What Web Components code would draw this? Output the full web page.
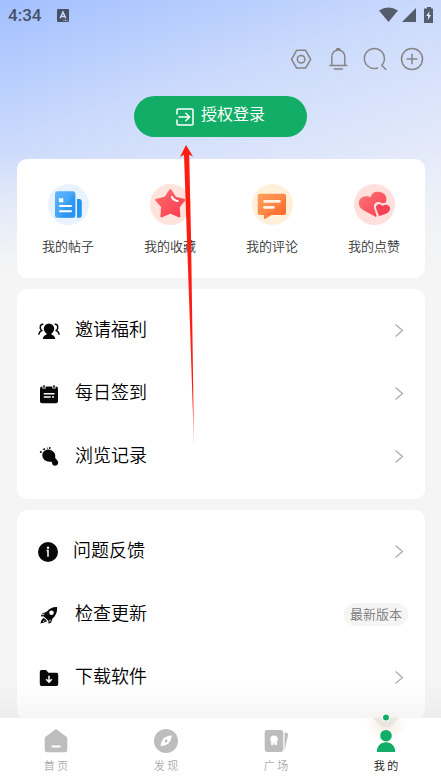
<!DOCTYPE html>
<html lang="zh-CN">
<head>
<meta charset="utf-8">
<meta name="viewport" content="width=device-width, initial-scale=1">
<title>我的</title>
<style>
  body { margin: 0; font-family: Roboto, "Noto Sans CJK SC", sans-serif; color: #111; background: #f5f5f5; }
</style>
</head>
<body>
<profile-page></profile-page>

<script>
const ICONS = {
  hexagon: [24, `<g fill="none" stroke="#858585" stroke-width="1.5" stroke-linejoin="round"><path d="M7.6 3.3h9l5.100 9-5.100 8.700h-9L2.500 12.300z"/><circle cx="12.100" cy="12.200" r="3.800"/></g>`],
  bell: [24, `<g fill="none" stroke="#858585" stroke-width="1.500" stroke-linecap="round" stroke-linejoin="round"><path d="M3.800 18.600h17M5.800 18.400V10c0-4 2.700-7 6.500-7s6.500 3 6.500 7v8.400M10.500 3c0-2 3.600-2 3.600 0M8.300 22h8"/></g>`],
  search: [24, `<g fill="none" stroke="#858585" stroke-width="1.500" stroke-linecap="round"><path d="M14.500 21A10 10 0 1 1 18.800 18.200L22.800 22.500"/></g>`],
  plus: [24, `<g fill="none" stroke="#858585" stroke-width="1.500" stroke-linecap="round"><circle cx="12" cy="12" r="10.500"/><path d="M7.200 12h9.600M12 7.200v9.600"/></g>`],
  login: [18, `<g fill="none" stroke="#fff" stroke-width="1.500" stroke-linecap="round" stroke-linejoin="round"><path d="M1 6V2q0-1 1-1h14q1 0 1 1v14q0 1-1 1H2q-1 0-1-1v-4M3 9h10.500M9.800 5.200L13.700 9l-3.900 3.800"/></g>`],
  chevron: [18, `<path d="M5.500 2.500l7 6-7 6" fill="none" stroke="#aaa" stroke-width="1.200"/>`],
  post: [41, `<defs><linearGradient id="a" x2="1" y2="1"><stop stop-color="#62b7ff"/><stop offset="1" stop-color="#2492ef"/></linearGradient></defs><circle cx="20.500" cy="20.500" r="20.500" fill="#e8f3ff"/><rect x="7" y="7.300" width="20.300" height="26.400" rx="2.500" fill="url(#a)"/><path d="M27.300 10v21q0 2.700-2.700 2.700H13Q16 20 27.300 10z" fill="#2492ef" opacity=".45"/><path d="M29 15h2.500q2.300 0 2.300 2.500v13.500q0 2.700-2.300 2.700H29z" fill="#2295ee"/><g fill="#fff"><path d="M11 14.300h4.300v3.900H11z"/><rect x="11" y="21" width="13" height="2" rx="1"/><rect x="11" y="26.200" width="13" height="2" rx="1"/></g>`],
  star: [41, `<defs><linearGradient id="a" x2="1" y2="1"><stop stop-color="#ff6b69"/><stop offset="1" stop-color="#fa3a52"/></linearGradient></defs><circle cx="20.500" cy="20.500" r="20.500" fill="#ffe3dc"/><path d="M20.400 6.500l4.900 7.500 8.700 2-5.500 6.800.7 9.400-8.800-3.700-8.800 3.700.700-9.400L6.500 16l8.900-2z" fill="url(#a)" stroke="url(#a)" stroke-width="2.400" stroke-linejoin="round"/><path d="M22 13q1 3 5.500 4" fill="none" stroke="#fff" stroke-width="2.200" stroke-linecap="round"/>`],
  comment: [41, `<defs><linearGradient id="a" x2="1" y2="1"><stop stop-color="#ffa05f"/><stop offset="1" stop-color="#fd6c2b"/></linearGradient></defs><circle cx="20.500" cy="20.500" r="20.500" fill="#fff0d9"/><path d="M8 9.700h23.800Q34 9.700 34 12v16.800q0 2.200-2.200 2.200H19.500l-6.600 4q-1 .2-1-1v-3H8q-2.300 0-2.300-2.200V12Q5.700 9.700 8 9.700z" fill="url(#a)"/><path d="M34 12v16.800q0 2.200-2.200 2.200H13Q28 25 34 12z" fill="#fd6c2b" opacity=".4"/><g fill="#fff3e4"><rect x="11.200" y="16" width="17.600" height="2.800" rx="1.400"/><rect x="11.200" y="22" width="11.600" height="2.800" rx="1.400"/></g>`],
  heart: [41, `<defs><linearGradient id="a" x2="1" y2="1"><stop stop-color="#ff7775"/><stop offset="1" stop-color="#f73c54"/></linearGradient></defs><circle cx="20.500" cy="20.500" r="20.500" fill="#ffe0dc"/><path d="M22 33L9 26C2.500 22 4 13 11 12.300c2.500-.2 4.500.300 5.500.900C17.500 9 21 7 25 7.800c6 .700 8.500 5.200 7 10.200z" fill="url(#a)"/><path d="M23.200 33.500L20.100 24c-1.200-5.500 4.400-7.800 7.900-4.500 5-2.500 10.600 2.500 8 7-2 3.500-6.500 5-12.800 7z" fill="#ffe0dc"/><path d="M25 32l-2.800-7.500c-1-4 3.500-6 6.200-2.500 4-3 8.600-.2 7.500 3.700-.900 3-5 4.700-10.900 6.300z" fill="#f54257"/>`],
  invite: [22, `<g fill="#080808"><circle cx="11" cy="8.700" r="5.200"/><path d="M4.800 19q.2-3.200 3.800-4.400V12h4.800v2.600q3.600 1.200 3.800 4.400z"/></g><g fill="none" stroke="#080808" stroke-width="1.500" stroke-linecap="round"><path d="M4.800 4.200C2 4 1.200 8.700 3.700 10.500Q1.200 11.800.900 14.200M17.200 4.200c2.800-.200 3.600 4.500 1.100 6.300q2.500 1.300 2.800 3.700"/></g>`],
  calendar: [22, `<rect x="2" y="3.600" width="18" height="16.600" rx="2" fill="#080808"/><g stroke="#fff" stroke-width="3.200"><path d="M6 1.500v4M16 1.500v4"/></g><g stroke="#080808" stroke-width="1.500" stroke-linecap="round"><path d="M6 2.700v1.600M16 2.700v1.600"/></g><g stroke="#fff" stroke-width="1.500"><path d="M5.700 10.700h10.800M5.700 14h7M14 14h2"/></g>`],
  foot: [22, `<g fill="#080808"><ellipse cx="10.800" cy="9.600" rx="6.700" ry="6" transform="rotate(25 10.800 9.600)"/><path d="M11 14.500l4.500-4.500 3.700 4.300q2 2.500 0 4.700-2.500 1.700-4.600-.3l-1-3z"/><circle cx="2.800" cy="6" r="1"/><circle cx="6.200" cy="3.200" r=".9"/><circle cx="11.800" cy="2" r=".9"/></g><path d="M5 3.800l1-1M8.900 2.200h1" stroke="#080808"/>`],
  info: [20, `<circle cx="10" cy="10" r="10" fill="#080808"/><circle cx="10" cy="5.700" r="1.200" fill="#fff"/><path d="M8.600 8.500h1.400v6.200" fill="none" stroke="#fff" stroke-width="1.500"/>`],
  rocket: [22, `<g fill="#080808"><path d="M19.100 3c.400 5-1.500 9-4.600 11.600l-1.300 3.800-2.500 1.400-.4-3.100-4.400-4.200-3.200-.3 1.500-2.800 4.400-1.600C11.400 4.400 14.800 2.800 19.100 3z"/><path d="M5.700 13.800l3.500 3.300-2 1-1 .500-3.800 1 1.100-3.700z"/></g><circle cx="13.500" cy="8.700" r="2.300" fill="#fff"/><path d="M4 11l2.600-1.100M11.800 17.700l.5-2M5 17.800l1.500-1.400" stroke="#fff" stroke-width=".9"/>`],
  folder: [22, `<path d="M3.500 3h4.600l2.400 2.800h8q1.700 0 1.700 1.700v9.800q0 1.700-1.700 1.700H3.500q-1.700 0-1.700-1.700V4.700Q1.800 3 3.500 3z" fill="#080808"/><path d="M11 8.800v6M8.200 12.200l2.800 2.900 2.800-2.900" fill="none" stroke="#fff" stroke-width="1.500"/>`],
  home: [24, `<path d="M10.800.700q1.200-.9 2.400 0l8.900 6.800q1.200.9 1.200 2.400v11q0 2.400-2.400 2.400H3.100Q.7 23.300.7 20.900v-11q0-1.500 1.200-2.400z" fill="#bdbdbd"/><path d="M8.400 17.500h7.400" stroke="#fff" stroke-width="2" stroke-linecap="round"/>`],
  compass: [24, `<circle cx="12" cy="12" r="12" fill="#bdbdbd"/><path d="M17.900 6.400q-5.600.4-8.300 2.800-2.400 2.500-3.300 7.900 5.700-.5 8.300-2.900 2.600-2.600 3.300-7.800z" fill="#fff"/><circle cx="12.100" cy="12" r="1.400" fill="#bdbdbd"/>`],
  album: [24, `<rect x=".700" y="1" width="18.600" height="22" rx="2.400" fill="#bdbdbd"/><path d="M20.600 3.200l1.900.5q1.900.6 1.500 2.300l-3.400 15.500z" fill="#bdbdbd"/><g fill="#fff"><circle cx="10" cy="10.200" r="3.800"/><path d="M8 12.500l1.800 1-.8 3-2.500-1.300zM12 12.500l-1.800 1 .8 3 2.500-1.300z"/></g>`],
  person: [24, `<g fill="#12ad66"><circle cx="12" cy="6.700" r="5.800"/><path d="M2.800 23c0-5.800 3.600-9.800 9.200-9.800s9.200 4 9.200 9.800z"/></g>`],
};

function define(name, html, setup) {
  const template = document.createElement("template");
  template.innerHTML = html;
  customElements.define(name, class extends HTMLElement {
    connectedCallback() {
      if (this.shadowRoot) return;
      this.attachShadow({ mode: "open" }).append(template.content.cloneNode(true));
      if (setup) setup(this, this.shadowRoot);
    }
  });
}

function makeIcon(host) {
  const icon = document.createElement("ui-icon");
  icon.setAttribute("name", host.getAttribute("icon"));
  return icon;
}

define("ui-icon", `<style>:host{display:block;flex:none;line-height:0} svg{display:block;overflow:visible}</style>`, (host, root) => {
  const [size, art] = ICONS[host.getAttribute("name")];
  root.innerHTML += `<svg width="${size}" height="${size}" viewBox="0 0 ${size} ${size}" aria-hidden="true">${art}</svg>`;
});

define("status-bar", `
<style>
  :host{display:flex;align-items:center;height:30px;padding:0 8px;color:#465066;font-size:17px}
  time{font-weight:500}
  .app{margin-left:16px;flex:1}
  .signals{display:flex;align-items:center;gap:4px}
  svg{display:block}
</style>
<time>4:34</time>
<svg class="app" width="12" height="13" viewBox="0 0 12 13" preserveAspectRatio="xMinYMid"><rect width="12" height="13" rx="1" fill="#465066"/><path d="M3.200 9.300L6 3l2.800 6.300M4.200 7.500h3.600" fill="none" stroke="#cbd9fc" stroke-width="1.500"/><path d="M6.500 11.300h4" stroke="#cbd9fc" stroke-dasharray="1 .5"/></svg>
<div class="signals">
  <svg width="19" height="16" viewBox="0 0 19 16"><path d="M0 3.500Q9.500-2.500 19 3.500L9.500 15z" fill="#555c6b"/></svg>
  <svg width="14" height="16" viewBox="0 0 14 16"><path d="M14 1v14H0z" fill="#555c6b"/></svg>
  <svg width="13" height="16" viewBox="0 0 13 16"><path d="M7 0h4v1.500h2V16H4V1.500h3z" fill="#555c6b"/><path d="M9.500 4L6.200 9h2L7.700 13.500 11 8H9z" fill="#e5ebfa"/></svg>
</div>`);

define("tool-bar", `
<style>
  :host{display:flex;justify-content:flex-end;gap:13px;padding:17px 17px 18px}
  button{all:unset;cursor:pointer}
</style>
<button aria-label="设置"><ui-icon name="hexagon"></ui-icon></button>
<button aria-label="通知"><ui-icon name="bell"></ui-icon></button>
<button aria-label="搜索"><ui-icon name="search"></ui-icon></button>
<button aria-label="添加"><ui-icon name="plus"></ui-icon></button>`);

define("login-button", `
<style>
  :host{display:flex;justify-content:center;margin:7px 0 22px}
  button{display:flex;align-items:center;justify-content:center;gap:7px;width:173px;height:41px;padding:0;border:0;border-radius:21px;background:#12ad66;color:#fff;font:inherit;font-size:16px;line-height:24px;cursor:pointer}
  span{padding-bottom:3px}
</style>
<button><ui-icon name="login"></ui-icon><span><slot></slot></span></button>`);

define("app-card", `
<style>
  :host{display:block;margin:0 16px 11px 17px;background:#fff;border-radius:10px;padding:10px 0 11px}
  :host([grid]){display:grid;grid-template-columns:repeat(4,1fr);padding:25px 0 21px}
</style><slot></slot>`);

define("quick-link", `
<style>
  :host{display:block}
  a{display:flex;flex-direction:column;align-items:center;gap:12px;color:#333;font-size:13px;font-weight:350;line-height:20px;text-decoration:none}
</style>
<a href="#"><span><slot></slot></span></a>`, (host, root) => root.querySelector("a").prepend(makeIcon(host)));

define("menu-row", `
<style>
  :host{display:block}
  a{display:flex;align-items:center;gap:15px;height:63px;padding:0 17px 0 21px;color:#000;font-size:18px;font-weight:350;text-decoration:none}
  .label{flex:1;line-height:26px;padding-bottom:2px}
  .badge{padding:0 6px;border-radius:12px;background:#f5f5f5;color:#777;font-size:13px;line-height:23px}
</style>
<a href="#"><span class="label"><slot></slot></span></a>`, (host, root) => {
  const link = root.querySelector("a");
  link.prepend(makeIcon(host));
  if (host.hasAttribute("badge")) {
    const badge = document.createElement("span");
    badge.className = "badge";
    badge.textContent = host.getAttribute("badge");
    link.append(badge);
  } else {
    link.insertAdjacentHTML("beforeend", `<ui-icon name="chevron"></ui-icon>`);
  }
});

define("nav-tab", `
<style>
  :host{display:block;flex:1;position:relative;color:#aaa}
  :host([current]){color:#111}
  a{display:flex;flex-direction:column;align-items:center;gap:6px;position:relative;color:inherit;font-size:11px;font-weight:350;line-height:16px;text-decoration:none}
  .mark{display:none;position:absolute;left:50%;top:-17px;transform:translateX(-50%)}
  :host([current]) .mark{display:block}
</style>
<svg class="mark" width="48" height="28" viewBox="0 0 48 28" aria-hidden="true"><defs><radialGradient id="g"><stop offset=".3" stop-color="#ecdfce" stop-opacity=".5"/><stop offset="1" stop-color="#fff3e4" stop-opacity="0"/></radialGradient></defs><ellipse cx="24" cy="12" rx="22" ry="16" fill="url(#g)"/><path d="M10 6Q13 7 16 11 20 15.500 24 15.500T32 11Q35 7 38 6z" fill="#ebe7e0"/><circle cx="24" cy="5.500" r="4" fill="#fff"/><circle cx="24" cy="5.500" r="3" fill="#12ad66"/></svg>
<a href="#"><span><slot></slot></span></a>`, (host, root) => root.querySelector("a").prepend(makeIcon(host)));

define("nav-bar", `<style>:host{display:flex;background:#fff;padding:11px 0 9px 1px;position:relative}</style><slot></slot>`);

define("pointer-arrow", `
<style>:host{display:block;position:absolute;left:179px;top:145px;pointer-events:none} svg{display:block}</style>
<svg width="18" height="306" viewBox="0 0 18 306" aria-hidden="true"><defs><linearGradient id="r" x2="0" y2="1"><stop offset=".85" stop-color="#ff1c10"/><stop offset="1" stop-color="#ff1c10" stop-opacity=".25"/></linearGradient></defs><path d="M7 0l7 11.500-3.800-1.700L12 90l1.300 90 1.800 125L11 180 7.800 90 5 9.800 1 12z" fill="url(#r)"/></svg>`);

define("profile-page", `
<style>
  :host{display:flex;flex-direction:column;height:100vh;position:relative;overflow:hidden}
  main{flex:1;min-height:0;overflow:hidden;position:relative;
    background:linear-gradient(#f5f5f500 55%,#f5f5f5) 0 0/100% 275px no-repeat,linear-gradient(162deg,#a2bfff,#cbdafc 35%,#e4eafa 70%,#f0f2f8) 0 0/100% 275px no-repeat,#f5f5f5}
  main::after{content:"";position:absolute;inset:auto 0 0;height:36px;background:linear-gradient(#0000,#00000009);pointer-events:none}
</style>
<main>
  <status-bar></status-bar>
  <tool-bar></tool-bar>
  <login-button>授权登录</login-button>
  <app-card grid>
    <quick-link icon="post">我的帖子</quick-link>
    <quick-link icon="star">我的收藏</quick-link>
    <quick-link icon="comment">我的评论</quick-link>
    <quick-link icon="heart">我的点赞</quick-link>
  </app-card>
  <app-card>
    <menu-row icon="invite">邀请福利</menu-row>
    <menu-row icon="calendar">每日签到</menu-row>
    <menu-row icon="foot">浏览记录</menu-row>
  </app-card>
  <app-card>
    <menu-row icon="info">问题反馈</menu-row>
    <menu-row icon="rocket" badge="最新版本">检查更新</menu-row>
    <menu-row icon="folder">下载软件</menu-row>
  </app-card>
</main>
<nav-bar role="navigation">
  <nav-tab icon="home">首 页</nav-tab>
  <nav-tab icon="compass">发 现</nav-tab>
  <nav-tab icon="album">广 场</nav-tab>
  <nav-tab icon="person" current>我 的</nav-tab>
</nav-bar>
<pointer-arrow></pointer-arrow>`);
</script>
</body>
</html>
